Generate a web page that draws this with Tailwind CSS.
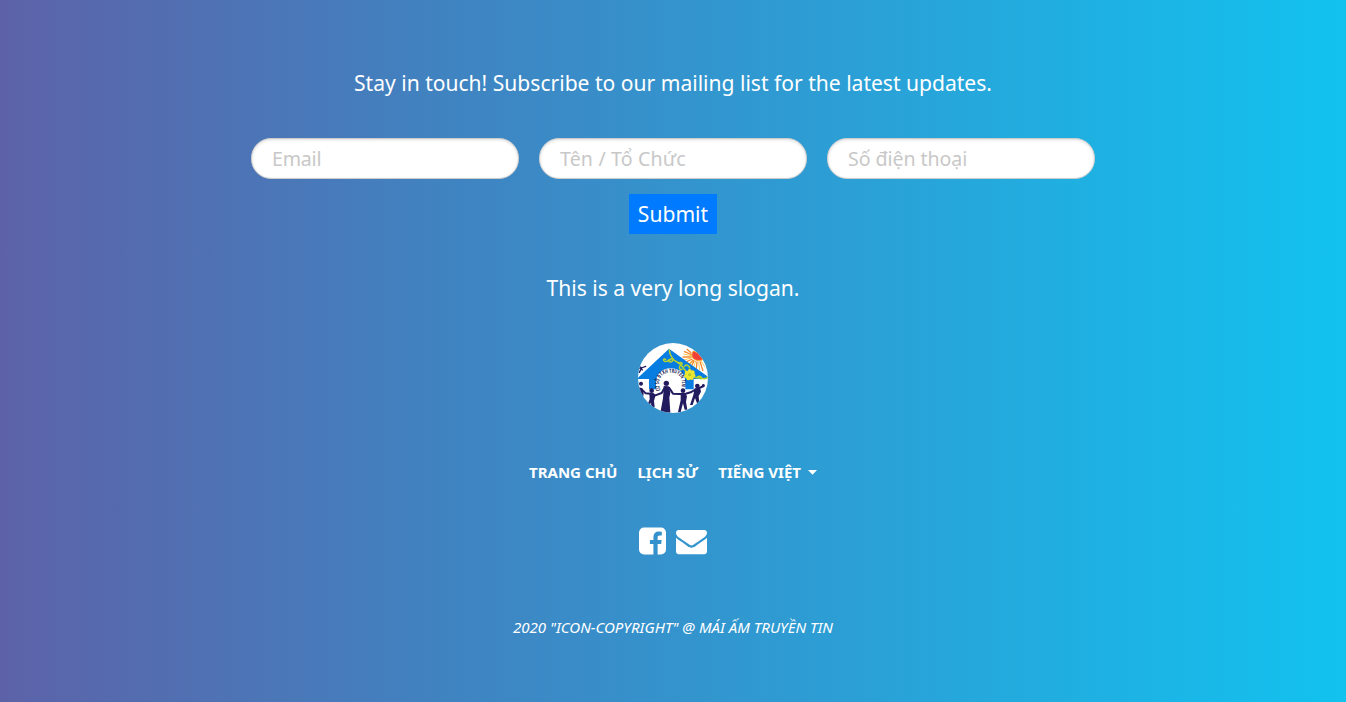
<!DOCTYPE html>
<html lang="vi">
<head>
<meta charset="utf-8">
<title>Mái Ấm Truyền Tin</title>
<script src="https://cdn.jsdelivr.net/npm/@tailwindcss/browser@4"></script>
</head>
<body class="font-['Noto_Sans',sans-serif] text-white">
<footer class="flex h-[702px] w-full flex-col items-center overflow-hidden bg-[linear-gradient(90deg,#5d62a8_0%,#4083c1_33%,#12c2ef_100%)] pt-[67px]">
  <p class="text-[21.07px] leading-8 whitespace-nowrap">Stay in touch! Subscribe to our mailing list for the latest updates.</p>
  <form class="mt-[39px] flex flex-col items-center">
    <div class="flex gap-5">
      <input class="h-[41px] w-[268px] rounded-[20px] border border-[#ccc] bg-white px-5 text-[19.6px] tracking-[-0.2px] shadow-[inset_0_1px_3px_#ddd] placeholder:text-[#c8c8c8]" placeholder="Email">
      <input class="h-[41px] w-[268px] rounded-[20px] border border-[#ccc] bg-white px-5 text-[19.6px] tracking-[0.15px] shadow-[inset_0_1px_3px_#ddd] placeholder:text-[#c8c8c8]" placeholder="Tên / Tổ Chức">
      <input class="h-[41px] w-[268px] rounded-[20px] border border-[#ccc] bg-white px-5 text-[19.6px] tracking-[-0.08px] shadow-[inset_0_1px_3px_#ddd] placeholder:text-[#c8c8c8]" placeholder="Số điện thoại">
    </div>
    <button type="button" class="mt-[15px] h-10 w-[88px] bg-[#007bff] text-[21.07px] leading-10">Submit</button>
  </form>
  <p class="mt-[38px] text-[21.07px] leading-8 whitespace-nowrap">This is a very long slogan.</p>
  <svg class="mt-[39px] size-[70px] shrink-0" viewBox="24 24 210 210">
    <defs>
      <clipPath id="round"><circle cx="129" cy="129" r="105"/></clipPath>
      <path id="arch" d="M92 166C80 136 92 113 122 113S164 136 151 165"/>
    </defs>
    <g clip-path="url(#round)">
      <path fill="#fff" d="M24 24h210v210H24z"/>
      <g stroke="#f58a2c" stroke-width="4" fill="none">
        <path d="M187 60 162 49M185 66 158 66M187 72 164 83M193 76 181 99M201 79 199 103M210 79 219 108M184 54 170 42M190 75 169 97"/>
        <path stroke="#f9bd39" stroke-width="2.5" d="M184 62 160 57M185 69 160 75M190 76 174 92M197 78 190 101M206 80 209 106M213 78 224 95"/>
      </g>
      <path fill="#ef4135" stroke="#f8a334" stroke-width="3" d="M190 48c-7 10-5 20 3 25s19 5 27 0L212 57Z"/>
      <path fill="#087de1" d="M117 41 232 124v8h-41v31h-27v-18c0-24-13-38-37-38s-42 15-42 38v18H57v-31H20Z"/>
      <path fill="#fff" d="M78 181v-38c0-26 18-43 44-43 27 0 44 15 44 43v38Z"/>
      <text fill="#182052" font-family="Noto Sans" font-size="17" font-weight="700"><textPath href="#arch" textLength="138" lengthAdjust="spacingAndGlyphs">CƠ SỞ BTXH TRUYỀN TIN</textPath></text>
      <g fill="none" stroke="#b8d42c" stroke-width="4.5" stroke-linecap="round">
        <path d="M118 45c0 10 3 16 9 24s-4 14-10 11c-5-4 1-8 4-5M126 70c-9 6-14 12-22 9-6-3-3-10 3-6M127 69c5 9 12 12 20 15 7 4 10 11 15 18 4 7 11 10 19 9M145 85c8-6 13-1 10 4M151 91c-5 7-2 15 5 12M179 99c-2-9-12-12-15-5M190 125c11 6 20 2 27 5s11 0 16-3M203 125c7-4 15 3 10 7"/>
      </g>
      <g fill="#efe62e">
        <circle cx="179" cy="108" r="6"/><circle cx="188" cy="112" r="6"/><circle cx="190" cy="121" r="6"/><circle cx="185" cy="129" r="6"/><circle cx="175" cy="130" r="6"/><circle cx="168" cy="123" r="6"/><circle cx="170" cy="113" r="6"/><circle cx="179" cy="119" r="10"/>
      </g>
      <circle cx="179" cy="119" r="5" fill="#b3cf2d"/>
      <g fill="none" stroke="#221b5e" stroke-linecap="round" stroke-linejoin="round">
        <path stroke-width="4" d="M25 101 34 99 47 94M32 96 37 105M28 112 34 101"/>
        <path stroke-width="6" d="M36 164 47 175 61 176 76 181 95 174 104 158 117 158 129 176 149 177 167 176 182 172 194 165 206 160 221 153"/>
      </g>
      <g fill="#221b5e">
        <circle cx="33" cy="146" r="6"/><path d="m24 156 13 4 4 17-5 24H24Z"/>
        <circle cx="65" cy="167" r="7"/><path d="m58 174 14 1 4 9-4 13 2 20H64l-1-15-3 8H52l7-17Z"/>
        <circle cx="109" cy="145" r="8"/><path d="m101 153 15 1 5 19-3 15 3 45H91l8-43 1-14Z"/>
        <circle cx="159" cy="167" r="7"/><path d="m152 175 15 1 4 8-3 16 4 24h-8l-5-19-7 26h-8l8-35Z"/>
        <circle cx="202" cy="153" r="7"/><path d="m194 160 17 1 2 9-7 13 2 22h-7l-6-16-7 21h-8l10-30Z"/>
        <circle cx="220" cy="151" r="4"/>
      </g>
    </g>
  </svg>
  <nav class="mt-[47px] flex h-6 items-center gap-5 text-[15.04px] leading-6 font-bold whitespace-nowrap">
    <a>TRANG CHỦ</a>
    <a>LỊCH SỬ</a>
    <a class="flex items-center gap-[7px]">TIẾNG VIỆT <svg class="h-[5px] w-[9px]" viewBox="0 0 9 5" fill="currentColor"><path d="M0 0h9L4.500 4.700Z"/></svg></a>
  </nav>
  <div class="mt-[41px] flex h-8 items-center gap-[10px]">
    <svg class="h-8 w-[27px]" viewBox="128 0 1536 1792" fill="currentColor"><path d="M1376 128q119 0 203.500 84.500t84.500 203.500v960q0 119-84.500 203.500t-203.500 84.500h-188v-595h199l30-232h-229v-148q0-56 23.500-84t91.500-28l122-1v-207q-63-9-178-9-136 0-217.500 80t-81.500 226v171h-200v232h200v595h-532q-119 0-203.500-84.500t-84.500-203.500v-960q0-119 84.500-203.500t203.500-84.500h960z"/></svg>
    <svg class="h-8 w-[31px]" viewBox="0 0 1792 1792" fill="currentColor"><path d="M1792 710v794q0 66-47 113t-113 47h-1472q-66 0-113-47t-47-113v-794q44 49 101 87 362 246 497 345 57 42 92.500 65.500t94.500 48 110 24.500h2q51 0 110-24.500t94.500-48 92.500-65.500q170-123 498-345 57-39 100-87zm0-294q0 79-49 151t-122 123q-376 261-468 325-10 7-42.500 31t-54 38.500-52 32.500-57.500 27-50 9h-2q-23 0-50-9t-57.500-27-52-32.500-54-38.500-42.500-31q-91-64-262-182.500t-205-142.500q-62-42-117-115.500t-55-136.500q0-78 41.500-130t118.500-52h1472q65 0 112.500 47t47.500 113z"/></svg>
  </div>
  <p class="mt-[58px] text-[15.04px] leading-6 whitespace-nowrap italic">2020 "ICON-COPYRIGHT" @ MÁI ẤM TRUYỀN TIN</p>
</footer>
</body>
</html>
